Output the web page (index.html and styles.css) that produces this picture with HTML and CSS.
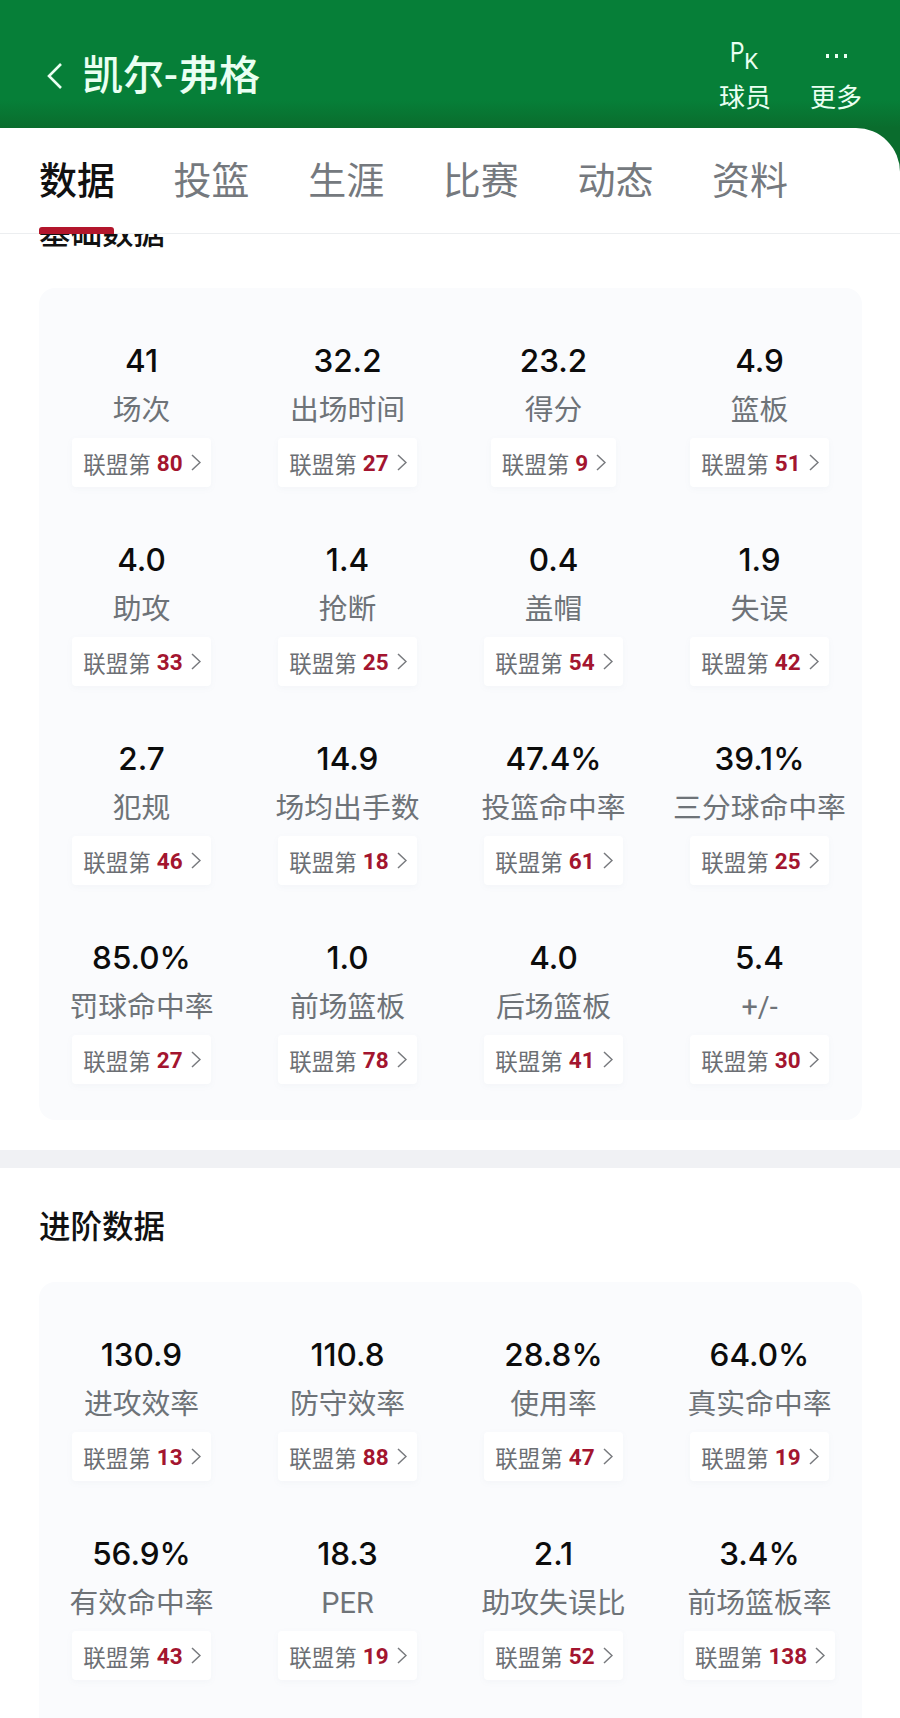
FILE: index.html
```html
<!DOCTYPE html>
<html>

<head>
    <meta charset="utf-8">
    <title>凯尔-弗格</title>
    <link rel="stylesheet" href="styles.css">
</head>

<body>
    <div class="app">
        <div class="header">
            <div class="header-left">
                <svg class="back" width="18" height="28" viewBox="0 0 18 28">
                    <polyline points="15,2 3,14 15,26" fill="none" stroke="#eafff2" stroke-width="2.6" />
                </svg>
                <h1 class="player">凯尔-弗格</h1>
            </div>
            <div class="header-right">
                <div class="action">
                    <div class="pk"><span class="pk-p">P</span><span class="pk-k">K</span></div>
                    <div class="action-name">球员</div>
                </div>
                <div class="action">
                    <div class="dots"><i></i><i></i><i></i></div>
                    <div class="action-name">更多</div>
                </div>
            </div>
        </div>

        <div class="panel">
            <div class="tabs">
                <span class="tab active">数据</span>
                <span class="tab">投篮</span>
                <span class="tab">生涯</span>
                <span class="tab">比赛</span>
                <span class="tab">动态</span>
                <span class="tab">资料</span>
            </div>

            <div class="content">
                <div class="section first">
                    <h2 class="section-title">基础数据</h2>
                    <div class="card">
                        <div class="stat"><div class="num">41</div><div class="label">场次</div><div class="rank">联盟第<b>80</b><svg width="10" height="17" viewBox="0 0 10 17"><polyline points="1,1 9,8.5 1,16" /></svg></div></div>
                        <div class="stat"><div class="num">32.2</div><div class="label">出场时间</div><div class="rank">联盟第<b>27</b><svg width="10" height="17" viewBox="0 0 10 17"><polyline points="1,1 9,8.5 1,16" /></svg></div></div>
                        <div class="stat"><div class="num">23.2</div><div class="label">得分</div><div class="rank">联盟第<b>9</b><svg width="10" height="17" viewBox="0 0 10 17"><polyline points="1,1 9,8.5 1,16" /></svg></div></div>
                        <div class="stat"><div class="num">4.9</div><div class="label">篮板</div><div class="rank">联盟第<b>51</b><svg width="10" height="17" viewBox="0 0 10 17"><polyline points="1,1 9,8.5 1,16" /></svg></div></div>

                        <div class="stat"><div class="num">4.0</div><div class="label">助攻</div><div class="rank">联盟第<b>33</b><svg width="10" height="17" viewBox="0 0 10 17"><polyline points="1,1 9,8.5 1,16" /></svg></div></div>
                        <div class="stat"><div class="num">1.4</div><div class="label">抢断</div><div class="rank">联盟第<b>25</b><svg width="10" height="17" viewBox="0 0 10 17"><polyline points="1,1 9,8.5 1,16" /></svg></div></div>
                        <div class="stat"><div class="num">0.4</div><div class="label">盖帽</div><div class="rank">联盟第<b>54</b><svg width="10" height="17" viewBox="0 0 10 17"><polyline points="1,1 9,8.5 1,16" /></svg></div></div>
                        <div class="stat"><div class="num">1.9</div><div class="label">失误</div><div class="rank">联盟第<b>42</b><svg width="10" height="17" viewBox="0 0 10 17"><polyline points="1,1 9,8.5 1,16" /></svg></div></div>

                        <div class="stat"><div class="num">2.7</div><div class="label">犯规</div><div class="rank">联盟第<b>46</b><svg width="10" height="17" viewBox="0 0 10 17"><polyline points="1,1 9,8.5 1,16" /></svg></div></div>
                        <div class="stat"><div class="num">14.9</div><div class="label">场均出手数</div><div class="rank">联盟第<b>18</b><svg width="10" height="17" viewBox="0 0 10 17"><polyline points="1,1 9,8.5 1,16" /></svg></div></div>
                        <div class="stat"><div class="num">47.4%</div><div class="label">投篮命中率</div><div class="rank">联盟第<b>61</b><svg width="10" height="17" viewBox="0 0 10 17"><polyline points="1,1 9,8.5 1,16" /></svg></div></div>
                        <div class="stat"><div class="num">39.1%</div><div class="label">三分球命中率</div><div class="rank">联盟第<b>25</b><svg width="10" height="17" viewBox="0 0 10 17"><polyline points="1,1 9,8.5 1,16" /></svg></div></div>

                        <div class="stat"><div class="num">85.0%</div><div class="label">罚球命中率</div><div class="rank">联盟第<b>27</b><svg width="10" height="17" viewBox="0 0 10 17"><polyline points="1,1 9,8.5 1,16" /></svg></div></div>
                        <div class="stat"><div class="num">1.0</div><div class="label">前场篮板</div><div class="rank">联盟第<b>78</b><svg width="10" height="17" viewBox="0 0 10 17"><polyline points="1,1 9,8.5 1,16" /></svg></div></div>
                        <div class="stat"><div class="num">4.0</div><div class="label">后场篮板</div><div class="rank">联盟第<b>41</b><svg width="10" height="17" viewBox="0 0 10 17"><polyline points="1,1 9,8.5 1,16" /></svg></div></div>
                        <div class="stat"><div class="num">5.4</div><div class="label">+/-</div><div class="rank">联盟第<b>30</b><svg width="10" height="17" viewBox="0 0 10 17"><polyline points="1,1 9,8.5 1,16" /></svg></div></div>
                    </div>
                </div>

                <div class="band"></div>

                <div class="section">
                    <h2 class="section-title">进阶数据</h2>
                    <div class="card open">
                        <div class="stat"><div class="num">130.9</div><div class="label">进攻效率</div><div class="rank">联盟第<b>13</b><svg width="10" height="17" viewBox="0 0 10 17"><polyline points="1,1 9,8.5 1,16" /></svg></div></div>
                        <div class="stat"><div class="num">110.8</div><div class="label">防守效率</div><div class="rank">联盟第<b>88</b><svg width="10" height="17" viewBox="0 0 10 17"><polyline points="1,1 9,8.5 1,16" /></svg></div></div>
                        <div class="stat"><div class="num">28.8%</div><div class="label">使用率</div><div class="rank">联盟第<b>47</b><svg width="10" height="17" viewBox="0 0 10 17"><polyline points="1,1 9,8.5 1,16" /></svg></div></div>
                        <div class="stat"><div class="num">64.0%</div><div class="label">真实命中率</div><div class="rank">联盟第<b>19</b><svg width="10" height="17" viewBox="0 0 10 17"><polyline points="1,1 9,8.5 1,16" /></svg></div></div>

                        <div class="stat"><div class="num">56.9%</div><div class="label">有效命中率</div><div class="rank">联盟第<b>43</b><svg width="10" height="17" viewBox="0 0 10 17"><polyline points="1,1 9,8.5 1,16" /></svg></div></div>
                        <div class="stat"><div class="num">18.3</div><div class="label">PER</div><div class="rank">联盟第<b>19</b><svg width="10" height="17" viewBox="0 0 10 17"><polyline points="1,1 9,8.5 1,16" /></svg></div></div>
                        <div class="stat"><div class="num">2.1</div><div class="label">助攻失误比</div><div class="rank">联盟第<b>52</b><svg width="10" height="17" viewBox="0 0 10 17"><polyline points="1,1 9,8.5 1,16" /></svg></div></div>
                        <div class="stat"><div class="num">3.4%</div><div class="label">前场篮板率</div><div class="rank">联盟第<b>138</b><svg width="10" height="17" viewBox="0 0 10 17"><polyline points="1,1 9,8.5 1,16" /></svg></div></div>
                    </div>
                </div>
            </div>
        </div>
    </div>
</body>

</html>
```

FILE: styles.css
```css
* {
    margin: 0;
    padding: 0;
    box-sizing: border-box;
}

html,
body {
    height: 100%;
    overflow: hidden;
    background-color: #fff;
}

body {
    font-family: "Roboto", "Noto Sans CJK SC", sans-serif;
}

.app {
    width: 900px;
    height: 1718px;
    display: flex;
    flex-direction: column;
    overflow: hidden;
    background: linear-gradient(to bottom, #067f38 0, #067f38 100px, #0a6c2d 128px, #0a6c2d 180px);
}

/* 顶部绿色栏 */
.header {
    height: 128px;
    flex-shrink: 0;
    display: flex;
    justify-content: space-between;
    padding: 0 38px 0 46px;
}

.header-left {
    display: flex;
    align-items: center;
    gap: 18px;
    padding-top: 23px;
}

.player {
    font-size: 41px;
    line-height: 56px;
    font-weight: 500;
    color: #eafff2;
}

.header-right {
    display: flex;
    gap: 39px;
    padding-top: 38px;
}

.action {
    width: 52px;
    display: flex;
    flex-direction: column;
    align-items: center;
}

.pk {
    height: 44px;
    width: 28px;
    margin-left: -3px;
    display: flex;
    color: #eafff2;
    font-size: 28px;
    line-height: 30px;
}

.pk-p {
    transform: scaleX(0.8);
    transform-origin: left center;
}

.pk-k {
    margin: 12px 0 0 -3px;
    font-size: 22px;
    line-height: 24px;
}

.dots {
    height: 44px;
    display: flex;
    gap: 6px;
    padding-top: 16px;
}

.dots i {
    width: 3px;
    height: 4px;
    background-color: #eafff2;
}

.action-name {
    font-size: 26px;
    line-height: 32px;
    color: #eafff2;
    white-space: nowrap;
}

/* 白色主体 */
.panel {
    flex: 1;
    min-height: 0;
    display: flex;
    flex-direction: column;
    background-color: #fff;
    border-top-right-radius: 44px;
}

.tabs {
    height: 106px;
    flex-shrink: 0;
    display: flex;
    gap: 60.6px;
    padding: 27px 0 0 39px;
    border-bottom: 1px solid #eceef0;
    position: relative;
    z-index: 2;
}

.tab {
    width: 74px;
    height: 79px;
    font-size: 38px;
    line-height: 52px;
    text-align: center;
    color: #75797e;
    white-space: nowrap;
    position: relative;
}

.tab.active {
    color: #111;
    font-weight: 500;
}

.tab.active::after {
    content: "";
    position: absolute;
    left: 0;
    right: -1px;
    bottom: 0;
    height: 7px;
    border-radius: 3px 3px 0 0;
    background-color: #b3162c;
}

.content {
    flex: 1;
    min-height: 0;
    overflow: hidden;
}

.section {
    padding: 38px 38px 60px 39px;
}

.section.first {
    margin-top: -22px;
    padding-top: 0;
    padding-bottom: 30px;
}

.section-title {
    font-size: 31.5px;
    line-height: 44px;
    font-weight: 500;
    color: #111;
    margin-bottom: 32px;
}

.band {
    height: 18px;
    background-color: #f0f1f4;
}

.card {
    display: grid;
    grid-template-columns: repeat(4, 206px);
    justify-content: center;
    row-gap: 51px;
    padding: 51px 0 36px;
    border-radius: 16px;
    background-color: #fafbfd;
}

/* 下面还有内容，卡片延伸到屏幕外 */
.card.open {
    padding-bottom: 80px;
}

.stat {
    display: flex;
    flex-direction: column;
    align-items: center;
}

.num {
    font-family: "Inter", "Roboto", sans-serif;
    font-size: 31.5px;
    line-height: 44px;
    font-weight: 500;
    color: #0c0c0c;
}

.label {
    margin-top: 7px;
    font-size: 28.8px;
    line-height: 40px;
    color: #6e7378;
    white-space: nowrap;
}

.rank {
    margin-top: 8px;
    height: 49px;
    display: flex;
    align-items: center;
    padding: 0 10px 0 11px;
    font-size: 22.5px;
    color: #6c6f74;
    background-color: #fff;
    border-radius: 4px;
    box-shadow: 0 2px 6px rgba(120, 130, 150, 0.05);
    white-space: nowrap;
}

.rank b {
    margin-left: 6px;
    font-weight: 700;
    color: #a3152f;
}

.rank svg {
    margin-left: 8px;
    fill: none;
    stroke: #77797d;
    stroke-width: 1.5;
}
```
